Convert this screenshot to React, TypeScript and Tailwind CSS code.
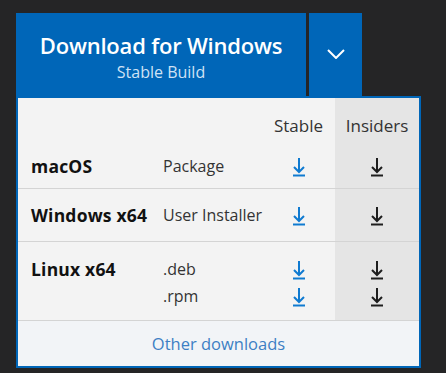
import React from "react";

interface Row {
  os: string;
  items: string[];
  height: string;
  pad: string;
}

const rows: Row[] = [
  { os: "macOS", items: ["Package"], height: "h-[47px]", pad: "pt-[11px]" },
  { os: "Windows x64", items: ["User Installer"], height: "h-[53px]", pad: "pt-[13px]" },
  { os: "Linux x64", items: [".deb", ".rpm"], height: "h-[79px]", pad: "pt-[14px]" },
];

function DownloadIcon({ color }: { color: string }) {
  return (
    <svg width="14" height="20" viewBox="0 0 14 20" fill="none" stroke={color} strokeWidth="2">
      <path d="M7 1v14" />
      <path d="M2 10l5 5 5-5" />
      <path d="M1 18.5h12" />
    </svg>
  );
}

export default function App() {
  return (
    <div
      className="w-[446px] h-[373px] bg-[#252526] pt-[13px] pl-[16px]"
      style={{ fontFamily: '"Open Sans", "Noto Sans", sans-serif' }}
    >
      {/* split button */}
      <div className="flex h-[83px]">
        <div className="w-[290px] bg-[#0066b8] flex flex-col items-center pt-[17px]">
          <span className="text-[22px] leading-[30px] font-semibold text-white tracking-[-0.2px]">
            Download for Windows
          </span>
          <span className="text-[16px] leading-[22px] text-[#cfe2f5] mt-[1px]">Stable Build</span>
        </div>
        <div className="w-[53px] ml-[3px] bg-[#0066b8] flex items-center justify-center pb-[2px]">
          <svg width="18" height="10" viewBox="0 0 18 10" fill="none" stroke="white" strokeWidth="2">
            <path d="M1 1l8 8 8-8" />
          </svg>
        </div>
      </div>

      {/* dropdown panel */}
      <div className="w-[405px] h-[272px] border-2 border-[#0066b8] bg-[#f3f3f3] flex flex-col">
        <div className="flex h-[44px] text-[17px] leading-6 text-[#333]">
          <div className="w-[145px]" />
          <div className="w-[99px]" />
          <div className="w-[73px] pt-[16px] text-center">Stable</div>
          <div className="w-[84px] pt-[16px] text-center bg-[#e5e5e5]">Insiders</div>
        </div>
        {rows.map((row) => (
          <div key={row.os} className={`flex ${row.height} border-b border-[#d4d4d4]`}>
            <div className={`w-[145px] pl-[13px] ${row.pad} text-[17.5px] leading-[27px] font-bold text-[#111] whitespace-nowrap tracking-[0.2px]`}>
              {row.os}
            </div>
            <div className={`w-[99px] ${row.pad} text-[16px] leading-[27px] text-[#333] whitespace-nowrap`}>
              {row.items.map((item) => (
                <div key={item}>{item}</div>
              ))}
            </div>
            <div className={`w-[73px] ${row.pad} flex flex-col items-center`}>
              {row.items.map((item) => (
                <div key={item} className="h-[27px] flex items-center">
                  <DownloadIcon color="#0f7ad0" />
                </div>
              ))}
            </div>
            <div className={`w-[84px] ${row.pad} flex flex-col items-center bg-[#e5e5e5]`}>
              {row.items.map((item) => (
                <div key={item} className="h-[27px] flex items-center">
                  <DownloadIcon color="#1e1e1e" />
                </div>
              ))}
            </div>
          </div>
        ))}
        <div className="flex-1 flex items-center justify-center bg-[#f2f4f7] pt-[2px]">
          <a className="text-[16.5px] text-[#3d7fc4]">Other downloads</a>
        </div>
      </div>
    </div>
  );
}
